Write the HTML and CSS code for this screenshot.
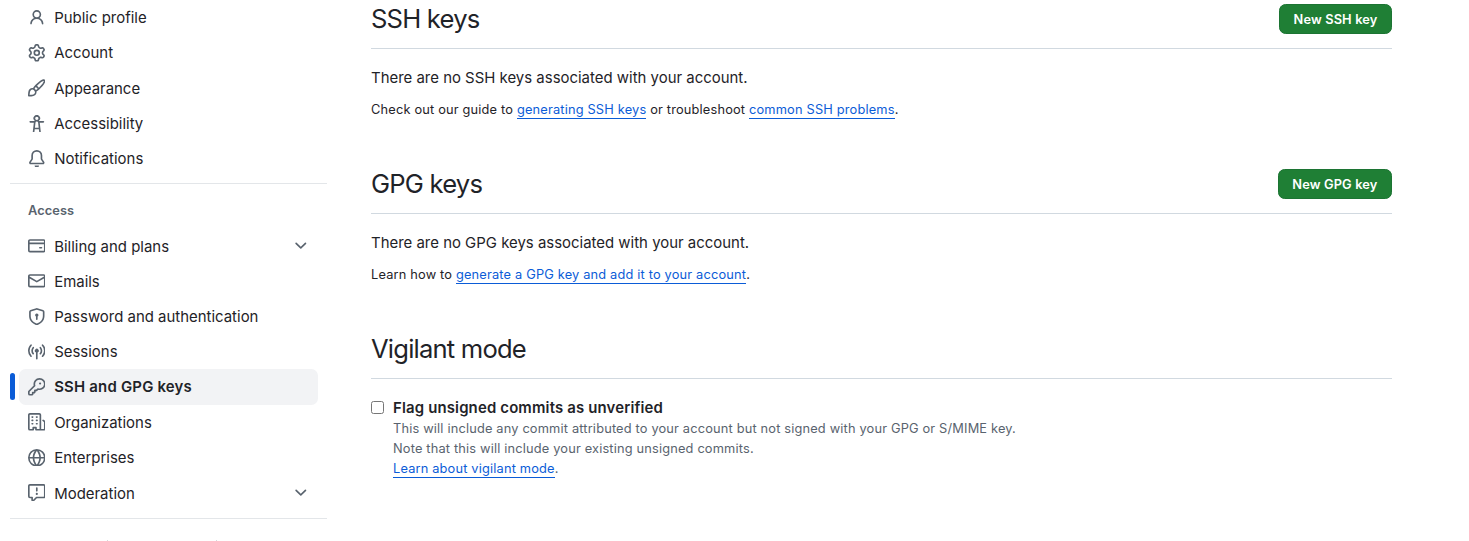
FILE: index.html
```html
<!DOCTYPE html>
<html lang="en">
<head>
<meta charset="utf-8">
<title>SSH and GPG keys</title>
<link rel="stylesheet" href="styles.css">
</head>
<body>
<div class="page">
  <nav class="sidebar">
    <ul class="nav-list">
      <li class="nav-item"><svg class="icon" viewBox="0 0 16 16"><path d="M10.561 8.073a6.005 6.005 0 0 1 3.432 5.142.75.75 0 1 1-1.498.07 4.5 4.5 0 0 0-8.99 0 .75.75 0 0 1-1.498-.07 6.004 6.004 0 0 1 3.431-5.142 3.999 3.999 0 1 1 5.123 0ZM10.5 5a2.5 2.5 0 1 0-5 0 2.5 2.5 0 0 0 5 0Z"/></svg><span class="label">Public profile</span></li>
      <li class="nav-item"><svg class="icon" viewBox="0 0 16 16"><path d="M8 0a8.2 8.2 0 0 1 .701.031C9.444.095 9.99.645 10.16 1.29l.288 1.107c.018.066.079.158.212.224.231.114.454.243.668.386.123.082.233.09.299.071l1.103-.303c.644-.176 1.392.021 1.82.63.27.385.506.792.704 1.218.315.675.111 1.422-.364 1.891l-.814.806c-.049.048-.098.147-.088.294.016.257.016.515 0 .772-.01.147.038.246.088.294l.814.806c.475.469.679 1.216.364 1.891a7.977 7.977 0 0 1-.704 1.217c-.428.61-1.176.807-1.82.63l-1.102-.302c-.067-.019-.177-.011-.3.071a5.909 5.909 0 0 1-.668.386c-.133.066-.194.158-.211.224l-.29 1.106c-.168.646-.715 1.196-1.458 1.26a8.006 8.006 0 0 1-1.402 0c-.743-.064-1.289-.614-1.458-1.26l-.289-1.106c-.018-.066-.079-.158-.212-.224a5.738 5.738 0 0 1-.668-.386c-.123-.082-.233-.09-.299-.071l-1.103.303c-.644.176-1.392-.021-1.82-.63a8.12 8.12 0 0 1-.704-1.218c-.315-.675-.111-1.422.363-1.891l.815-.806c.05-.048.098-.147.088-.294a6.214 6.214 0 0 1 0-.772c.01-.147-.038-.246-.088-.294l-.815-.806C.635 6.045.431 5.298.746 4.623a7.92 7.92 0 0 1 .704-1.217c.428-.61 1.176-.807 1.82-.63l1.102.302c.067.019.177.011.3-.071.214-.143.437-.272.668-.386.133-.066.194-.158.211-.224l.29-1.106C6.009.645 6.556.095 7.299.03 7.53.01 7.764 0 8 0Zm-.571 1.525c-.036.003-.108.036-.137.146l-.289 1.105c-.147.561-.549.967-.998 1.189-.173.086-.34.183-.5.29-.417.278-.97.423-1.529.27l-1.103-.303c-.109-.03-.175.016-.195.045-.22.312-.412.644-.573.99-.014.031-.021.11.059.19l.815.806c.411.406.562.957.53 1.456a4.709 4.709 0 0 0 0 .582c.032.499-.119 1.05-.53 1.456l-.815.806c-.081.08-.073.159-.059.19.162.346.353.677.573.989.02.03.085.076.195.046l1.102-.303c.56-.153 1.113-.008 1.53.27.161.107.328.204.501.29.447.222.85.629.997 1.189l.289 1.105c.029.109.101.143.137.146a6.6 6.6 0 0 0 1.142 0c.036-.003.108-.036.137-.146l.289-1.105c.147-.561.549-.967.998-1.189.173-.086.34-.183.5-.29.417-.278.97-.423 1.529-.27l1.103.303c.109.029.175-.016.195-.045.22-.313.411-.644.573-.99.014-.031.021-.11-.059-.19l-.815-.806c-.411-.406-.562-.957-.53-1.456a4.709 4.709 0 0 0 0-.582c-.032-.499.119-1.05.53-1.456l.815-.806c.081-.08.073-.159.059-.19a6.464 6.464 0 0 0-.573-.989c-.02-.03-.085-.076-.195-.046l-1.102.303c-.56.153-1.113.008-1.53-.27a4.44 4.44 0 0 0-.501-.29c-.447-.222-.85-.629-.997-1.189l-.289-1.105c-.029-.11-.101-.143-.137-.146a6.6 6.6 0 0 0-1.142 0ZM11 8a3 3 0 1 1-6 0 3 3 0 0 1 6 0ZM9.5 8a1.5 1.5 0 1 0-3.001.001A1.5 1.5 0 0 0 9.5 8Z"/></svg><span class="label">Account</span></li>
      <li class="nav-item"><svg class="icon" viewBox="0 0 16 16"><path d="M11.134 1.535c.7-.509 1.416-.942 2.076-1.155.649-.21 1.463-.267 2.069.34.603.601.568 1.411.368 2.07-.202.668-.624 1.39-1.125 2.096-1.011 1.424-2.496 2.987-3.775 4.249-1.098 1.084-2.132 1.839-3.04 2.3a3.744 3.744 0 0 1-1.055 3.217c-.431.431-1.065.691-1.657.861-.614.177-1.294.287-1.914.357A21.151 21.151 0 0 1 .797 16H.743l.007-.75H.749L.742 16a.75.75 0 0 1-.743-.742l.743-.008-.742.007v-.054a21.25 21.25 0 0 1 .13-2.284c.067-.647.187-1.287.358-1.914.17-.591.43-1.226.86-1.657a3.746 3.746 0 0 1 3.227-1.054c.466-.893 1.225-1.907 2.314-2.982 1.271-1.255 2.833-2.75 4.245-3.777ZM1.62 13.089c-.051.464-.086.929-.104 1.395.466-.018.932-.053 1.396-.104a10.511 10.511 0 0 0 1.668-.309c.526-.151.856-.325 1.011-.48a2.25 2.25 0 1 0-3.182-3.182c-.155.155-.329.485-.48 1.01a10.515 10.515 0 0 0-.309 1.67Zm10.396-10.34c-1.224.89-2.605 2.189-3.822 3.384l1.718 1.718c1.21-1.205 2.51-2.597 3.387-3.833.47-.662.78-1.227.912-1.662.134-.444.032-.551.009-.575h-.001V1.78c-.014-.014-.113-.113-.548.027-.432.14-.995.462-1.655.942Zm-4.832 7.266-.001.001a9.859 9.859 0 0 0 1.63-1.142L7.155 7.216a9.7 9.7 0 0 0-1.161 1.607c.482.302.889.71 1.19 1.192Z"/></svg><span class="label">Appearance</span></li>
      <li class="nav-item"><svg class="icon" viewBox="0 0 16 16"><path d="M9.923 5.302c.063.063.122.129.178.198H14A.75.75 0 0 1 14 7h-3.3l.578 5.163.362 2.997a.75.75 0 0 1-1.49.18L9.868 13H6.132l-.282 2.34a.75.75 0 0 1-1.49-.18l.362-2.997L5.3 7H2a.75.75 0 0 1 0-1.5h3.9a2.54 2.54 0 0 1 .176-.198 3 3 0 1 1 3.847 0ZM9.2 7.073h-.001a1.206 1.206 0 0 0-2.397 0L6.305 11.5h3.39ZM9.5 3a1.5 1.5 0 1 0-3.001.001A1.5 1.5 0 0 0 9.5 3Z"/></svg><span class="label">Accessibility</span></li>
      <li class="nav-item"><svg class="icon" viewBox="0 0 16 16"><path d="M8 16a2 2 0 0 0 1.985-1.75c.017-.137-.097-.25-.235-.25h-3.5c-.138 0-.252.113-.235.25A2 2 0 0 0 8 16ZM3 5a5 5 0 0 1 10 0v2.947c0 .05.015.098.042.139l1.703 2.555A1.519 1.519 0 0 1 13.482 13H2.518a1.516 1.516 0 0 1-1.263-2.36l1.703-2.554A.255.255 0 0 0 3 7.947Zm5-3.5A3.5 3.5 0 0 0 4.5 5v2.947c0 .346-.102.683-.294.97l-1.703 2.556a.017.017 0 0 0-.003.01l.001.006c0 .002.002.004.004.006l.006.004.007.001h10.964l.007-.001.006-.004.004-.006.001-.007a.017.017 0 0 0-.003-.01l-1.703-2.554a1.745 1.745 0 0 1-.294-.97V5A3.5 3.5 0 0 0 8 1.5Z"/></svg><span class="label">Notifications</span></li>
    </ul>
    <div class="divider"></div>
    <h3 class="group-title">Access</h3>
    <ul class="nav-list">
      <li class="nav-item expandable"><svg class="icon" viewBox="0 0 16 16"><path d="M10.75 9a.75.75 0 0 0 0 1.5h1.5a.75.75 0 0 0 0-1.5h-1.5Z"/><path d="M0 3.75C0 2.784.784 2 1.75 2h12.5c.966 0 1.75.784 1.75 1.75v8.5A1.75 1.75 0 0 1 14.25 14H1.75A1.75 1.75 0 0 1 0 12.25ZM14.5 6.5h-13v5.75c0 .138.112.25.25.25h12.5a.25.25 0 0 0 .25-.25Zm0-2.75a.25.25 0 0 0-.25-.25H1.75a.25.25 0 0 0-.25.25V5h13Z"/></svg><span class="label">Billing and plans</span><svg class="icon chevron" viewBox="0 0 16 16"><path d="M12.78 5.22a.749.749 0 0 1 0 1.06l-4.25 4.25a.749.749 0 0 1-1.06 0L3.22 6.28a.749.749 0 1 1 1.06-1.06L8 8.939l3.72-3.719a.749.749 0 0 1 1.06 0Z"/></svg></li>
      <li class="nav-item"><svg class="icon" viewBox="0 0 16 16"><path d="M1.75 2h12.5c.966 0 1.75.784 1.75 1.75v8.5A1.75 1.75 0 0 1 14.25 14H1.75A1.75 1.75 0 0 1 0 12.25v-8.5C0 2.784.784 2 1.75 2ZM1.5 12.251c0 .138.112.25.25.25h12.5a.25.25 0 0 0 .25-.25V5.809L8.38 9.397a.75.75 0 0 1-.76 0L1.5 5.809v6.442Zm13-8.181v-.32a.25.25 0 0 0-.25-.25H1.75a.25.25 0 0 0-.25.25v.32L8 7.88Z"/></svg><span class="label">Emails</span></li>
      <li class="nav-item"><svg class="icon" viewBox="0 0 16 16"><path d="m8.533.133 5.25 1.68A1.75 1.75 0 0 1 15 3.48V7c0 1.566-.32 3.182-1.303 4.682-.983 1.498-2.585 2.813-5.032 3.855a1.697 1.697 0 0 1-1.33 0c-2.447-1.042-4.049-2.357-5.032-3.855C1.32 10.182 1 8.566 1 7V3.48a1.75 1.75 0 0 1 1.217-1.667l5.25-1.68a1.748 1.748 0 0 1 1.066 0Zm-.61 1.429.001.001-5.25 1.68a.251.251 0 0 0-.174.237V7c0 1.36.275 2.666 1.057 3.859.784 1.194 2.121 2.342 4.366 3.298a.196.196 0 0 0 .154 0c2.245-.957 3.582-2.103 4.366-3.297C13.225 9.666 13.5 8.358 13.5 7V3.48a.25.25 0 0 0-.174-.238l-5.25-1.68a.25.25 0 0 0-.153 0ZM9.5 6.5c0 .536-.286 1.032-.75 1.3v2.45a.75.75 0 0 1-1.5 0V7.8A1.5 1.5 0 1 1 9.5 6.5Z"/></svg><span class="label">Password and authentication</span></li>
      <li class="nav-item"><svg class="icon" viewBox="0 0 16 16"><path d="M8.75 8.582v5.668a.75.75 0 0 1-1.5 0V8.582a1.75 1.75 0 1 1 1.5 0Zm3.983-7.125a.75.75 0 0 1 1.06.026A7.976 7.976 0 0 1 16 7c0 2.139-.84 4.083-2.207 5.517a.75.75 0 1 1-1.086-1.034A6.474 6.474 0 0 0 14.5 7a6.474 6.474 0 0 0-1.793-4.483.75.75 0 0 1 .026-1.06Zm-9.466 0c.3.286.312.76.026 1.06A6.474 6.474 0 0 0 1.5 7a6.47 6.47 0 0 0 1.793 4.483.75.75 0 0 1-1.086 1.034A7.973 7.973 0 0 1 0 7c0-2.139.84-4.083 2.207-5.517a.75.75 0 0 1 1.06-.026Zm8.556 2.321A4.988 4.988 0 0 1 13 7a4.988 4.988 0 0 1-1.177 3.222.75.75 0 1 1-1.146-.967A3.487 3.487 0 0 0 11.5 7c0-.86-.309-1.645-.823-2.255a.75.75 0 0 1 1.146-.967Zm-6.492.958A3.48 3.48 0 0 0 4.5 7a3.48 3.48 0 0 0 .823 2.255.75.75 0 0 1-1.146.967A4.981 4.981 0 0 1 3 7a4.982 4.982 0 0 1 1.188-3.236.75.75 0 1 1 1.143.972Z"/></svg><span class="label">Sessions</span></li>
      <li class="nav-item current"><svg class="icon" viewBox="0 0 16 16"><path d="M10.5 0a5.499 5.499 0 1 1-1.288 10.848l-.932.932a.749.749 0 0 1-.53.22H7v.75a.749.749 0 0 1-.22.53l-.5.5a.749.749 0 0 1-.53.22H5v.75a.749.749 0 0 1-.22.53l-.5.5a.749.749 0 0 1-.53.22h-2A1.75 1.75 0 0 1 0 14.25v-2c0-.199.079-.389.22-.53l4.932-4.932A5.5 5.5 0 0 1 10.5 0Zm-4 5.5c-.001.431.069.86.205 1.269a.75.75 0 0 1-.181.768L1.5 12.56v1.69c0 .138.112.25.25.25h1.69l.06-.06v-1.19a.75.75 0 0 1 .75-.75h1.19l.06-.06v-1.19a.75.75 0 0 1 .75-.75h1.19l1.023-1.025a.75.75 0 0 1 .768-.18A4 4 0 1 0 6.5 5.5ZM11 6a1 1 0 1 1 0-2 1 1 0 0 1 0 2Z"/></svg><span class="label">SSH and GPG keys</span></li>
      <li class="nav-item"><svg class="icon" viewBox="0 0 16 16"><path d="M1.75 16A1.75 1.75 0 0 1 0 14.25V1.75C0 .784.784 0 1.75 0h8.5C11.216 0 12 .784 12 1.75v12.5c0 .085-.006.168-.018.25h2.268a.25.25 0 0 0 .25-.25V8.285a.25.25 0 0 0-.111-.208l-1.055-.703a.749.749 0 1 1 .832-1.248l1.055.703c.487.325.779.871.779 1.456v5.965A1.75 1.75 0 0 1 14.25 16h-3.5a.766.766 0 0 1-.197-.026c-.099.017-.2.026-.303.026h-3a.75.75 0 0 1-.75-.75V14h-1v1.25a.75.75 0 0 1-.75.75Zm-.25-1.75c0 .138.112.25.25.25H4v-1.25a.75.75 0 0 1 .75-.75h2.5a.75.75 0 0 1 .75.75v1.25h2.25a.25.25 0 0 0 .25-.25V1.75a.25.25 0 0 0-.25-.25h-8.5a.25.25 0 0 0-.25.25ZM3.75 6h.5a.75.75 0 0 1 0 1.5h-.5a.75.75 0 0 1 0-1.5ZM3 3.75A.75.75 0 0 1 3.75 3h.5a.75.75 0 0 1 0 1.5h-.5A.75.75 0 0 1 3 3.75Zm4 3A.75.75 0 0 1 7.75 6h.5a.75.75 0 0 1 0 1.5h-.5A.75.75 0 0 1 7 6.75ZM7.75 3h.5a.75.75 0 0 1 0 1.5h-.5a.75.75 0 0 1 0-1.5ZM3 9.75A.75.75 0 0 1 3.75 9h.5a.75.75 0 0 1 0 1.5h-.5A.75.75 0 0 1 3 9.75ZM7.75 9h.5a.75.75 0 0 1 0 1.5h-.5a.75.75 0 0 1 0-1.5Z"/></svg><span class="label">Organizations</span></li>
      <li class="nav-item"><svg class="icon" viewBox="0 0 16 16"><path d="M8 0a8 8 0 1 1 0 16A8 8 0 0 1 8 0ZM5.78 8.75a9.64 9.64 0 0 0 1.363 4.177c.255.426.542.832.857 1.215.245-.296.551-.705.857-1.215A9.64 9.64 0 0 0 10.22 8.75Zm4.44-1.5a9.64 9.64 0 0 0-1.363-4.177c-.307-.51-.612-.919-.857-1.215a9.927 9.927 0 0 0-.857 1.215A9.64 9.64 0 0 0 5.78 7.25Zm-5.944 1.5H1.543a6.507 6.507 0 0 0 4.666 5.5c-.123-.181-.24-.365-.352-.552-.715-1.192-1.437-2.874-1.581-4.948Zm-2.733-1.5h2.733c.144-2.074.866-3.756 1.58-4.948.12-.197.237-.381.353-.552a6.507 6.507 0 0 0-4.666 5.5Zm10.181 1.5c-.144 2.074-.866 3.756-1.58 4.948-.12.197-.237.381-.353.552a6.507 6.507 0 0 0 4.666-5.5Zm2.733-1.5a6.507 6.507 0 0 0-4.666-5.5c.123.181.24.365.353.552.714 1.192 1.436 2.874 1.58 4.948Z"/></svg><span class="label">Enterprises</span></li>
      <li class="nav-item expandable"><svg class="icon" viewBox="0 0 16 16"><path d="M0 1.75C0 .784.784 0 1.75 0h12.5C15.216 0 16 .784 16 1.75v9.5A1.75 1.75 0 0 1 14.25 13H8.06l-2.573 2.573A1.458 1.458 0 0 1 3 14.543V13H1.75A1.75 1.75 0 0 1 0 11.25Zm1.75-.25a.25.25 0 0 0-.25.25v9.5c0 .138.112.25.25.25h2a.75.75 0 0 1 .75.75v2.19l2.72-2.72a.749.749 0 0 1 .53-.22h6.5a.25.25 0 0 0 .25-.25v-9.5a.25.25 0 0 0-.25-.25Zm7 2.25v2.5a.75.75 0 0 1-1.5 0v-2.5a.75.75 0 0 1 1.5 0ZM9 9a1 1 0 1 1-2 0 1 1 0 0 1 2 0Z"/></svg><span class="label">Moderation</span><svg class="icon chevron" viewBox="0 0 16 16"><path d="M12.78 5.22a.749.749 0 0 1 0 1.06l-4.25 4.25a.749.749 0 0 1-1.06 0L3.22 6.28a.749.749 0 1 1 1.06-1.06L8 8.939l3.72-3.719a.749.749 0 0 1 1.06 0Z"/></svg></li>
    </ul>
    <div class="divider divider-last"></div>
    <div class="next-group"><i class="speck"></i><i class="speck"></i></div>
  </nav>
  <main class="content">
    <section class="section">
      <header class="section-head"><h2 class="title">SSH keys</h2><button class="btn" type="button">New SSH key</button></header>
      <p class="lead">There are no SSH keys associated with your account.</p>
      <p class="note">Check out our guide to <a class="link" href="#">generating SSH keys</a> or troubleshoot <a class="link" href="#">common SSH problems</a>.</p>
    </section>
    <section class="section">
      <header class="section-head"><h2 class="title">GPG keys</h2><button class="btn" type="button">New GPG key</button></header>
      <p class="lead">There are no GPG keys associated with your account.</p>
      <p class="note">Learn how to <a class="link" href="#">generate a GPG key and add it to your account</a>.</p>
    </section>
    <section class="section">
      <header class="section-head"><h2 class="title">Vigilant mode</h2></header>
      <div class="option">
        <input class="checkbox" type="checkbox" id="vigilant">
        <div class="option-body">
          <label class="option-label" for="vigilant">Flag unsigned commits as unverified</label>
          <p class="hint">This will include any commit attributed to your account but not signed with your GPG or S/MIME key.</p>
          <p class="hint">Note that this will include your existing unsigned commits.</p>
          <p class="hint"><a class="link" href="#">Learn about vigilant mode</a>.</p>
        </div>
      </div>
    </section>
  </main>
</div>
</body>
</html>
```
FILE: styles.css
```css
* { box-sizing: border-box; margin: 0; padding: 0; }
body {
  height: 541px;
  overflow: hidden;
  background: #fff;
  color: #1f2328;
  font-family: Inter, "Liberation Sans", sans-serif;
  font-size: 14.95px;
}
.page { display: flex; height: 541px; overflow: hidden; }
.sidebar { width: 317px; margin-left: 10px; flex: none; }
.nav-list { list-style: none; padding: 0 9px; }
.nav-item {
  display: flex;
  align-items: center;
  height: 35.25px;
  padding: 0 8.8px;
  border-radius: 6.6px;
}
.icon { width: 17.6px; height: 17.6px; margin-right: 8.8px; flex: none; fill: #59636e; }
.chevron { margin: 0 0 0 auto; }
.label { padding-top: 1px; line-height: 22px; }
.expandable .label { padding-top: 2.5px; }
.current { position: relative; background: #f2f3f5; font-weight: 600; }
.current .label { letter-spacing: 0.2px; }
.current::before {
  content: "";
  position: absolute;
  left: -9px;
  top: 4px;
  width: 5px;
  height: 27px;
  border-radius: 6px;
  background: #0b5cd7;
}
.divider { height: 1px; margin: 7px 0 8px; background: #e3e6e9; }
.divider-last { margin-top: 7.75px; }
.group-title {
  padding: 9px 18px 0;
  height: 36px;
  font-size: 12.8px;
  font-weight: 600;
  line-height: 20px;
  letter-spacing: 0.1px;
  color: #59636e;
}
.next-group { display: flex; gap: 108px; padding: 13px 0 0 97px; }
.speck { width: 1px; height: 1px; background: #d5d8db; }
.content { width: 1021px; margin-left: 44px; }
.section { height: 165px; }
.section-head {
  display: flex;
  justify-content: space-between;
  height: 49px;
  border-bottom: 1px solid #d1d9e0;
}
.title { font-size: 25.6px; font-weight: 400; line-height: 38px; letter-spacing: -0.8px; }
.btn {
  height: 30px;
  margin-top: 4px;
  padding: 1px 13.5px 0;
  border: 1px solid #1c7433;
  border-radius: 6.6px;
  background: #1f7f35;
  color: #fff;
  font: 600 12.8px/27px Inter, "Liberation Sans", sans-serif;
  letter-spacing: 0.15px;
}
.lead { margin-top: 18px; line-height: 23px; }
.note { margin-top: 10px; font-size: 12.8px; line-height: 20px; letter-spacing: 0.18px; }
.link { color: #0b5cd7; text-decoration: none; border-bottom: 1px solid #0b5cd7; padding-bottom: 1px; }
.option { display: flex; margin-top: 18px; }
.checkbox { width: 13px; height: 13px; margin: 4px 9px 0 0; }
.option-label { display: block; height: 22px; font-weight: 600; line-height: 23px; letter-spacing: 0.15px; }
.hint { font-size: 12.8px; line-height: 20px; letter-spacing: 0.175px; color: #59636e; }
```
